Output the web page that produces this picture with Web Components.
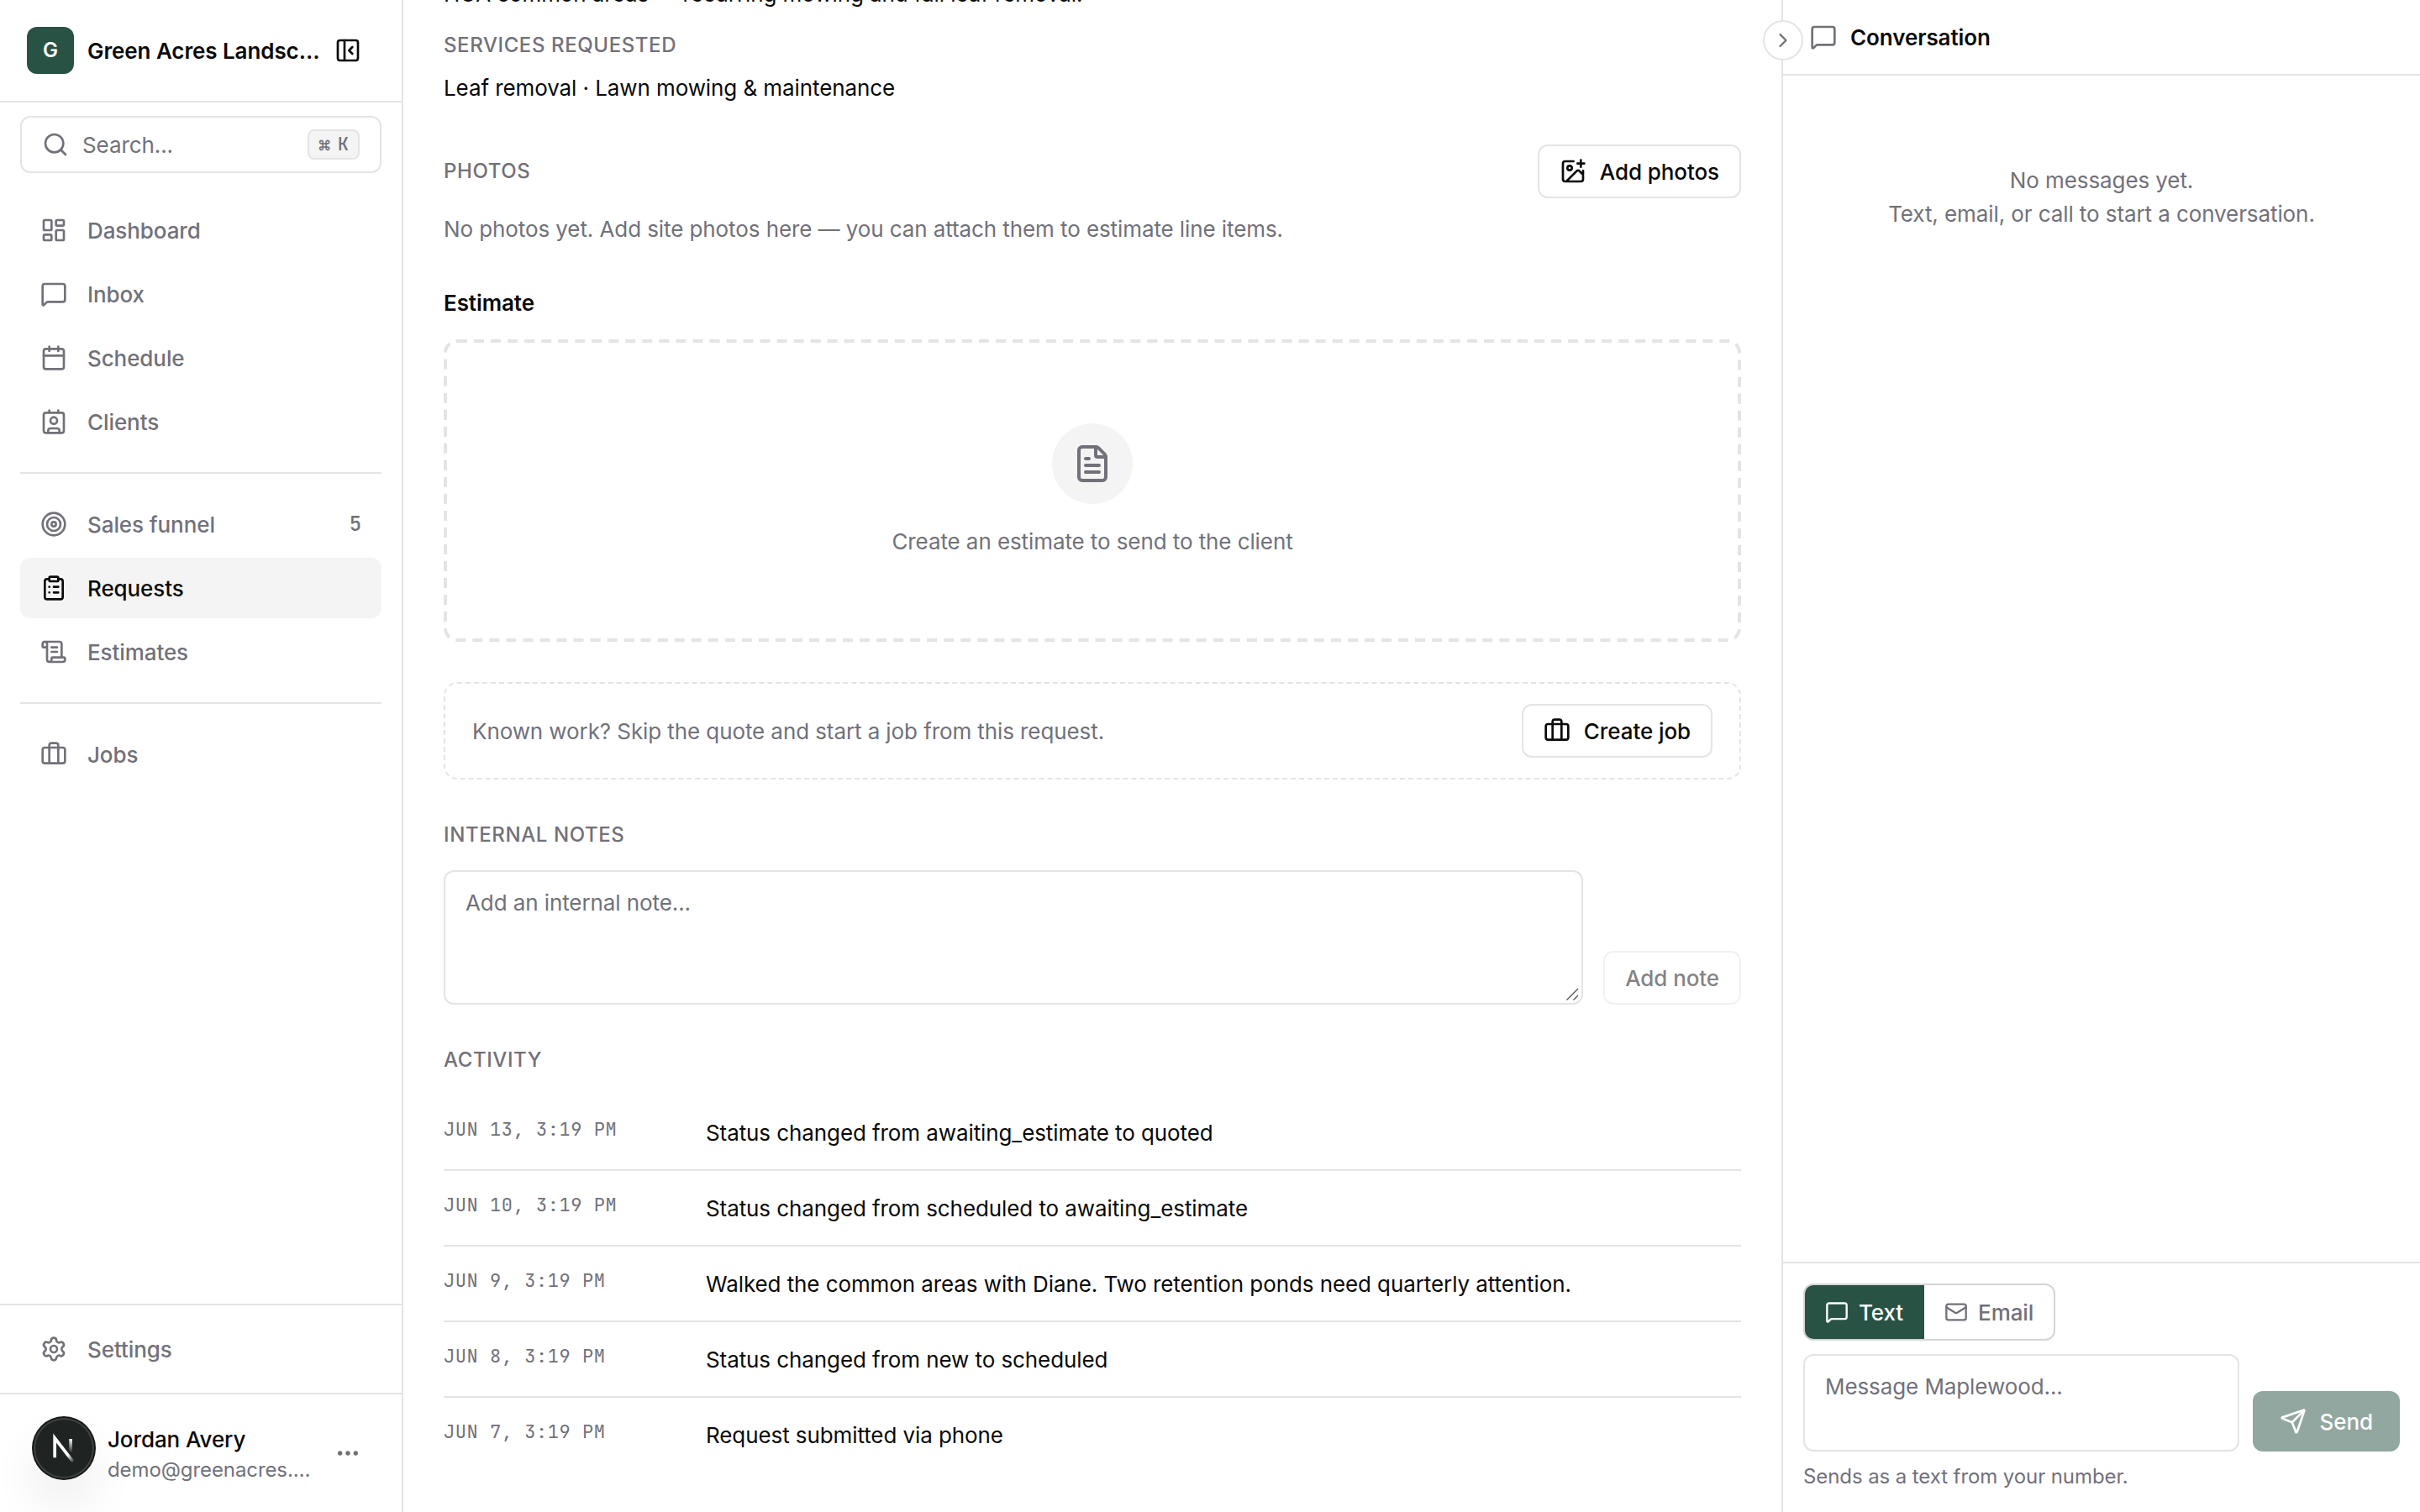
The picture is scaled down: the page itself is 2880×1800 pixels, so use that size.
<!DOCTYPE html>
<html lang="en">
<head>
<meta charset="utf-8">
<title>Request</title>
<style>
  :root {
    --ink: #0a0a0a;
    --muted: #71717a;
    --line: #e4e4e4;
    --soft: #f4f4f4;
    --brand: #285244;
    --mono: "JetBrains Mono", "DejaVu Sans Mono", monospace;
  }
  body {
    margin: 0;
    background: #fff;
    color: var(--ink);
    font-family: Inter, "Liberation Sans", sans-serif;
    font-size: 26px;
    line-height: 40px;
    letter-spacing: -0.09px;
  }
</style>
</head>
<body>
<app-shell>
  <app-sidebar slot="sidebar"></app-sidebar>

  <request-page>
    <p>HOA common areas — recurring mowing and fall leaf removal.</p>
    <section-block heading="Services requested" gap="12" top="24">
      <p>Leaf removal · Lawn mowing &amp; maintenance</p>
    </section-block>
    <section-block heading="Photos" gap="16">
      <ui-button slot="action" icon="image-plus">Add photos</ui-button>
      <p class="muted">No photos yet. Add site photos here — you can attach them to estimate line items.</p>
    </section-block>
    <section-block heading="Estimate" gap="24" strong>
      <empty-box icon="file-text">Create an estimate to send to the client</empty-box>
    </section-block>
    <job-prompt>
      Known work? Skip the quote and start a job from this request.
      <ui-button slot="action" icon="briefcase">Create job</ui-button>
    </job-prompt>
    <section-block heading="Internal notes" gap="24">
      <note-form></note-form>
    </section-block>
    <section-block heading="Activity" gap="24">
      <activity-row date="Jun 13, 3:19 PM">Status changed from awaiting_estimate to quoted</activity-row>
      <activity-row date="Jun 10, 3:19 PM">Status changed from scheduled to awaiting_estimate</activity-row>
      <activity-row date="Jun 9, 3:19 PM">Walked the common areas with Diane. Two retention ponds need quarterly attention.</activity-row>
      <activity-row date="Jun 8, 3:19 PM">Status changed from new to scheduled</activity-row>
      <activity-row date="Jun 7, 3:19 PM">Request submitted via phone</activity-row>
    </section-block>
  </request-page>

  <conversation-panel slot="panel"></conversation-panel>
</app-shell>

<script>
// 24x24 stroke icons
const icons = {
  'dashboard': '<rect width="7" height="9" x="3" y="3" rx="1"/><rect width="7" height="5" x="14" y="3" rx="1"/><rect width="7" height="9" x="14" y="12" rx="1"/><rect width="7" height="5" x="3" y="16" rx="1"/>',
  'message': '<path d="M22 17a2 2 0 0 1-2 2H6.828a2 2 0 0 0-1.414.586l-2.202 2.202A.71.71 0 0 1 2 21.286V5a2 2 0 0 1 2-2h16a2 2 0 0 1 2 2z"/>',
  'calendar': '<path d="M8 2v4M16 2v4M3 10h18"/><rect width="18" height="18" x="3" y="4" rx="2"/>',
  'contact': '<path d="M16 2v2M8 2v2M7 22v-2a2 2 0 0 1 2-2h6a2 2 0 0 1 2 2v2"/><circle cx="12" cy="11" r="3"/><rect width="18" height="18" x="3" y="4" rx="2"/>',
  'target': '<circle cx="12" cy="12" r="10"/><circle cx="12" cy="12" r="6"/><circle cx="12" cy="12" r="2"/>',
  'clipboard': '<rect width="8" height="4" x="8" y="2" rx="1"/><path d="M16 4h2a2 2 0 0 1 2 2v14a2 2 0 0 1-2 2H6a2 2 0 0 1-2-2V6a2 2 0 0 1 2-2h2M12 11h4M12 16h4M8 11h.01M8 16h.01"/>',
  'scroll': '<path d="M15 12h-5M15 8h-5M19 17V5a2 2 0 0 0-2-2H4"/><path d="M8 21h12a2 2 0 0 0 2-2v-1a1 1 0 0 0-1-1H11a1 1 0 0 0-1 1v1a2 2 0 1 1-4 0V5a2 2 0 1 0-4 0v2a1 1 0 0 0 1 1h3"/>',
  'briefcase': '<path d="M16 20V4a2 2 0 0 0-2-2h-4a2 2 0 0 0-2 2v16"/><rect width="20" height="14" x="2" y="6" rx="2"/>',
  'settings': '<path d="M9.671 4.136a2.34 2.34 0 0 1 4.659 0 2.34 2.34 0 0 0 3.319 1.915 2.34 2.34 0 0 1 2.33 4.033 2.34 2.34 0 0 0 0 3.831 2.34 2.34 0 0 1-2.33 4.033 2.34 2.34 0 0 0-3.319 1.915 2.34 2.34 0 0 1-4.659 0 2.34 2.34 0 0 0-3.32-1.915 2.34 2.34 0 0 1-2.33-4.033 2.34 2.34 0 0 0 0-3.831A2.34 2.34 0 0 1 6.35 6.051a2.34 2.34 0 0 0 3.319-1.915"/><circle cx="12" cy="12" r="3"/>',
  'panel-close': '<rect width="18" height="18" x="3" y="3" rx="2"/><path d="M9 3v18M16 15l-3-3 3-3"/>',
  'search': '<path d="m21 21-4.34-4.34"/><circle cx="11" cy="11" r="8"/>',
  'ellipsis': '<circle cx="12" cy="12" r="1"/><circle cx="19" cy="12" r="1"/><circle cx="5" cy="12" r="1"/>',
  'image-plus': '<path d="M16 5h6M19 2v6M21 11.5V19a2 2 0 0 1-2 2H5a2 2 0 0 1-2-2V5a2 2 0 0 1 2-2h7.5M21 15l-3.086-3.086a2 2 0 0 0-2.828 0L6 21"/><circle cx="9" cy="9" r="2"/>',
  'file-text': '<path d="M6 22a2 2 0 0 1-2-2V4a2 2 0 0 1 2-2h8a2.4 2.4 0 0 1 1.704.706l3.588 3.588A2.4 2.4 0 0 1 20 8v12a2 2 0 0 1-2 2z"/><path d="M14 2v5a1 1 0 0 0 1 1h5M10 9H8M16 13H8M16 17H8"/>',
  'chevron-right': '<path d="m9 18 6-6-6-6"/>',
  'mail': '<path d="m22 7-8.991 5.727a2 2 0 0 1-2.009 0L2 7"/><rect width="20" height="16" x="2" y="4" rx="2"/>',
  'send': '<path d="M14.536 21.686a.5.5 0 0 0 .937-.024l6.5-19a.496.496 0 0 0-.635-.635l-19 6.5a.5.5 0 0 0-.024.937l7.93 3.18a2 2 0 0 1 1.112 1.11z"/><path d="m21.854 2.147-10.94 10.939"/>'
};

class UiIcon extends HTMLElement {
  connectedCallback() {
    const size = this.getAttribute('size') || 32;
    this.attachShadow({ mode: 'open' }).innerHTML = `
      <style>
        :host { display: block; flex: none; width: ${size}px; height: ${size}px; }
        svg { display: block; }
      </style>
      <svg width="${size}" height="${size}" viewBox="0 0 24 24" fill="none" stroke="currentColor"
        stroke-width="2" stroke-linecap="round" stroke-linejoin="round">${icons[this.getAttribute('name')]}</svg>
    `;
  }
}

class UiButton extends HTMLElement {
  connectedCallback() {
    const icon = this.getAttribute('icon');
    this.attachShadow({ mode: 'open' }).innerHTML = `
      <style>
        :host {
          display: flex;
          align-items: center;
          gap: 16px;
          flex: none;
          box-sizing: border-box;
          height: 64px;
          padding: 0 24px;
          border: 2px solid var(--line);
          border-radius: 12px;
          background: #fff;
          color: var(--ink);
          font-weight: 500;
          white-space: nowrap;
        }
        :host([disabled]) { opacity: 0.5; }
        :host([primary]) {
          height: 72px;
          padding: 0 32px;
          border: 0;
          background: var(--brand);
          color: #fff;
        }
        span { padding-top: 2px; }
      </style>
      ${icon ? `<ui-icon name="${icon}"></ui-icon>` : ''}
      <span><slot></slot></span>
    `;
  }
}

class NavItem extends HTMLElement {
  connectedCallback() {
    this.attachShadow({ mode: 'open' }).innerHTML = `
      <style>
        :host {
          display: flex;
          align-items: center;
          gap: 24px;
          height: 72px;
          padding: 0 24px;
          border-radius: 12px;
          color: var(--muted);
          font-weight: 500;
        }
        :host([active]) { background: var(--soft); color: var(--ink); }
        .label { flex: 1; padding-top: 2px; }
        .count { font: 500 24px/32px var(--mono); }
      </style>
      <ui-icon name="${this.getAttribute('icon')}"></ui-icon>
      <span class="label"><slot></slot></span>
      ${this.hasAttribute('count') ? `<span class="count">${this.getAttribute('count')}</span>` : ''}
    `;
  }
}

class AppSidebar extends HTMLElement {
  connectedCallback() {
    this.attachShadow({ mode: 'open' }).innerHTML = `
      <style>
        :host {
          display: flex;
          flex-direction: column;
          box-sizing: border-box;
          width: 480px;
          height: 1800px;
          border-right: 2px solid var(--line);
        }
        header {
          display: flex;
          align-items: center;
          gap: 16px;
          height: 120px;
          padding: 0 48px 0 32px;
          border-bottom: 2px solid var(--line);
        }
        .logo {
          display: grid;
          place-items: center;
          flex: none;
          width: 56px;
          height: 56px;
          border-radius: 12px;
          background: var(--brand);
          color: #fff;
          font-size: 24px;
          font-weight: 600;
        }
        .name {
          flex: 1;
          min-width: 0;
          padding-top: 2px;
          white-space: nowrap;
          font-weight: 600;
        }
        .search {
          display: flex;
          align-items: center;
          gap: 16px;
          box-sizing: border-box;
          height: 68px;
          margin: 16px 24px 32px;
          padding: 0 24px;
          border: 2px solid var(--line);
          border-radius: 12px;
          color: var(--muted);
        }
        .search span { flex: 1; padding-top: 2px; }
        kbd {
          padding: 0 11px;
          border: 2px solid var(--line);
          border-radius: 8px;
          background: var(--soft);
          font: 500 22px/32px var(--mono);
          letter-spacing: 0;
          word-spacing: -4px;
        }
        nav {
          display: flex;
          flex-direction: column;
          gap: 4px;
          margin: 0 24px;
        }
        nav + nav {
          margin-top: 24px;
          padding-top: 24px;
          border-top: 2px solid var(--line);
        }
        .bottom {
          margin-top: auto;
          padding: 16px 24px;
          border-top: 2px solid var(--line);
        }
        footer {
          position: relative;
          display: flex;
          align-items: center;
          gap: 24px;
          box-sizing: border-box;
          height: 142px;
          padding: 0 48px 0 128px;
          border-top: 2px solid var(--line);
          color: var(--muted);
        }
        .user {
          flex: 1;
          min-width: 0;
          padding-top: 3px;
          line-height: 36px;
          white-space: nowrap;
        }
        .user .who { color: var(--ink); font-weight: 500; }
        .user .mail { font-size: 24px; }
        /* round badge floating over the corner */
        .badge {
          position: absolute;
          left: 40px;
          bottom: 40px;
          width: 72px;
          height: 72px;
          border-radius: 50%;
          background: #1f2422;
          box-shadow: 0 0 0 2px #171717, inset 0 0 0 2px rgba(255, 255, 255, 0.14),
            0 32px 64px -16px rgba(0, 0, 0, 0.24);
        }
      </style>
      <header>
        <div class="logo">G</div>
        <div class="name">Green Acres Landsc…</div>
        <ui-icon name="panel-close"></ui-icon>
      </header>
      <div class="search">
        <ui-icon name="search"></ui-icon>
        <span>Search...</span>
        <kbd>⌘ K</kbd>
      </div>
      <nav>
        <nav-item icon="dashboard">Dashboard</nav-item>
        <nav-item icon="message">Inbox</nav-item>
        <nav-item icon="calendar">Schedule</nav-item>
        <nav-item icon="contact">Clients</nav-item>
      </nav>
      <nav>
        <nav-item icon="target" count="5">Sales funnel</nav-item>
        <nav-item icon="clipboard" active>Requests</nav-item>
        <nav-item icon="scroll">Estimates</nav-item>
      </nav>
      <nav>
        <nav-item icon="briefcase">Jobs</nav-item>
      </nav>
      <div class="bottom">
        <nav-item icon="settings">Settings</nav-item>
      </div>
      <footer>
        <div class="user">
          <div class="who">Jordan Avery</div>
          <div class="mail">demo@greenacres.…</div>
        </div>
        <ui-icon name="ellipsis"></ui-icon>
        <svg class="badge" viewBox="0 0 72 72" fill="none" stroke-width="1.86">
          <defs>
            <linearGradient id="a" gradientUnits="userSpaceOnUse" x1="9.95" y1="11.13" x2="13.6" y2="15.6">
              <stop stop-color="#fff"/><stop offset="1" stop-color="#fff" stop-opacity="0"/>
            </linearGradient>
            <linearGradient id="b" gradientUnits="userSpaceOnUse" x1="11.8" y1="1.4" x2="11.79" y2="9.8">
              <stop stop-color="#fff"/><stop offset="1" stop-color="#fff" stop-opacity="0"/>
            </linearGradient>
          </defs>
          <g transform="translate(20.5 22) scale(2)">
            <path d="M13.3 15.2 2.34 1v11.6" stroke="url(#a)"/>
            <path d="M11.825 1.5v11.6" stroke="url(#b)"/>
          </g>
        </svg>
      </footer>
    `;
  }
}

class SectionBlock extends HTMLElement {
  connectedCallback() {
    const strong = this.hasAttribute('strong');
    this.attachShadow({ mode: 'open' }).innerHTML = `
      <style>
        :host { display: block; margin-top: ${this.getAttribute('top') || 48}px; }
        header {
          display: flex;
          align-items: center;
          justify-content: space-between;
          margin-bottom: ${this.getAttribute('gap')}px;
        }
        h2 {
          margin: 0;
          color: var(--muted);
          font-size: 24px;
          font-weight: 500;
          line-height: 36px;
          letter-spacing: 0.6px;
          text-transform: uppercase;
        }
        h2.strong {
          margin-bottom: -1px;
          padding-top: 1px;
          color: var(--ink);
          font-size: 26px;
          font-weight: 600;
          line-height: 40px;
          letter-spacing: -0.09px;
          text-transform: none;
        }
        ::slotted(p) { margin: 0 0 -1px; padding-top: 1px; }
        ::slotted(p.muted) { color: var(--muted); }
      </style>
      <header>
        <h2 class="${strong ? 'strong' : ''}">${this.getAttribute('heading')}</h2>
        <slot name="action"></slot>
      </header>
      <slot></slot>
    `;
  }
}

class EmptyBox extends HTMLElement {
  connectedCallback() {
    this.attachShadow({ mode: 'open' }).innerHTML = `
      <style>
        :host {
          position: relative;
          display: flex;
          flex-direction: column;
          align-items: center;
          gap: 25px;
          padding: 100px 0 99px;
          color: var(--muted);
        }
        /* scaled up so the dashes stay long */
        :host::before {
          content: "";
          position: absolute;
          top: 0;
          left: 0;
          box-sizing: border-box;
          width: 50%;
          height: 50%;
          border: 2px dashed var(--line);
          border-radius: 8px;
          transform: scale(2);
          transform-origin: 0 0;
        }
        .disc {
          display: grid;
          place-items: center;
          width: 96px;
          height: 96px;
          border-radius: 50%;
          background: var(--soft);
        }
      </style>
      <div class="disc"><ui-icon name="${this.getAttribute('icon')}" size="48"></ui-icon></div>
      <div><slot></slot></div>
    `;
  }
}

class JobPrompt extends HTMLElement {
  connectedCallback() {
    this.attachShadow({ mode: 'open' }).innerHTML = `
      <style>
        :host {
          display: flex;
          align-items: center;
          justify-content: space-between;
          margin-top: 48px;
          padding: 24px 32px;
          border: 2px dashed var(--line);
          border-radius: 16px;
          color: var(--muted);
        }
        div { padding-top: 2px; }
      </style>
      <div><slot></slot></div>
      <slot name="action"></slot>
    `;
  }
}

class UiTextarea extends HTMLElement {
  connectedCallback() {
    this.attachShadow({ mode: 'open' }).innerHTML = `
      <style>
        :host {
          position: relative;
          display: block;
          flex: 1;
          box-sizing: border-box;
          padding: 17px 24px 15px;
          border: 2px solid var(--line);
          border-radius: 12px;
          color: var(--muted);
        }
        svg { position: absolute; right: 2px; bottom: 2px; }
      </style>
      <slot></slot>
      ${this.hasAttribute('resizable') ? `
      <svg width="16" height="16" fill="none" stroke="#555" stroke-width="1.4">
        <path d="M.5 14.5 14 1M8.5 14.5 14 9"/>
      </svg>` : ''}
    `;
  }
}

class NoteForm extends HTMLElement {
  connectedCallback() {
    this.attachShadow({ mode: 'open' }).innerHTML = `
      <style>
        :host { display: flex; align-items: flex-end; gap: 24px; }
        ui-textarea { height: 160px; }
      </style>
      <ui-textarea resizable>Add an internal note...</ui-textarea>
      <ui-button disabled>Add note</ui-button>
    `;
  }
}

class ActivityRow extends HTMLElement {
  connectedCallback() {
    this.attachShadow({ mode: 'open' }).innerHTML = `
      <style>
        :host {
          display: flex;
          gap: 32px;
          padding: 25px 0 23px;
          border-bottom: 2px solid var(--line);
        }
        :host(:last-child) { border-bottom: 0; }
        time {
          width: 280px;
          color: var(--muted);
          font: 22px/32px var(--mono);
          letter-spacing: 0.55px;
          text-transform: uppercase;
        }
      </style>
      <time>${this.getAttribute('date')}</time>
      <span><slot></slot></span>
    `;
  }
}

class RequestPage extends HTMLElement {
  connectedCallback() {
    this.attachShadow({ mode: 'open' }).innerHTML = `
      <style>
        :host {
          display: flex;
          flex-direction: column;
          justify-content: flex-end;
          box-sizing: border-box;
          height: 1800px;
          padding: 0 48px 48px;
          overflow: hidden;
        }
        ::slotted(p) { margin: 0 0 -1px; padding-top: 1px; }
      </style>
      <slot></slot>
    `;
  }
}

class ConversationPanel extends HTMLElement {
  connectedCallback() {
    this.attachShadow({ mode: 'open' }).innerHTML = `
      <style>
        :host {
          position: relative;
          display: flex;
          flex-direction: column;
          box-sizing: border-box;
          width: 760px;
          height: 1800px;
          border-left: 2px solid var(--line);
          color: var(--muted);
        }
        header {
          display: flex;
          align-items: center;
          gap: 16px;
          height: 88px;
          padding: 0 32px;
          border-bottom: 2px solid var(--line);
        }
        h2 {
          margin: 0;
          padding-top: 2px;
          color: var(--ink);
          font-size: 26px;
          font-weight: 600;
        }
        .toggle {
          position: absolute;
          top: 24px;
          left: -24px;
          display: grid;
          place-items: center;
          box-sizing: border-box;
          width: 48px;
          height: 48px;
          border: 2px solid var(--line);
          border-radius: 50%;
          background: #fff;
        }
        .messages { flex: 1; padding-top: 105px; text-align: center; }
        .composer {
          display: flex;
          flex-direction: column;
          padding: 24px;
          border-top: 2px solid var(--line);
        }
        .tabs {
          display: flex;
          align-self: flex-start;
          overflow: hidden;
          border: 2px solid #d4d4d8;
          border-radius: 12px;
          font-weight: 500;
        }
        .tabs div {
          display: flex;
          align-items: center;
          gap: 12px;
          height: 64px;
          padding: 0 24px;
        }
        .tabs .on { padding-right: 25px; background: var(--brand); color: #fff; }
        .tabs span { padding-top: 2px; }
        .row { display: flex; align-items: flex-end; gap: 16px; margin: 16px 0 12px; }
        ui-textarea { height: 116px; }
        small { font-size: 24px; line-height: 36px; }
      </style>
      <header>
        <ui-icon name="message"></ui-icon>
        <h2>Conversation</h2>
      </header>
      <div class="messages">No messages yet.<br>Text, email, or call to start a conversation.</div>
      <div class="composer">
        <div class="tabs">
          <div class="on"><ui-icon name="message" size="28"></ui-icon><span>Text</span></div>
          <div><ui-icon name="mail" size="28"></ui-icon><span>Email</span></div>
        </div>
        <div class="row">
          <ui-textarea>Message Maplewood...</ui-textarea>
          <ui-button primary disabled icon="send">Send</ui-button>
        </div>
        <small>Sends as a text from your number.</small>
      </div>
      <div class="toggle"><ui-icon name="chevron-right" size="28"></ui-icon></div>
    `;
  }
}

class AppShell extends HTMLElement {
  connectedCallback() {
    this.attachShadow({ mode: 'open' }).innerHTML = `
      <style>
        :host {
          display: grid;
          grid-template-columns: 480px minmax(0, 1fr) 760px;
          height: 1800px;
          overflow: hidden;
        }
      </style>
      <slot name="sidebar"></slot>
      <slot></slot>
      <slot name="panel"></slot>
    `;
  }
}

customElements.define('ui-icon', UiIcon);
customElements.define('ui-button', UiButton);
customElements.define('nav-item', NavItem);
customElements.define('app-sidebar', AppSidebar);
customElements.define('section-block', SectionBlock);
customElements.define('empty-box', EmptyBox);
customElements.define('job-prompt', JobPrompt);
customElements.define('ui-textarea', UiTextarea);
customElements.define('note-form', NoteForm);
customElements.define('activity-row', ActivityRow);
customElements.define('request-page', RequestPage);
customElements.define('conversation-panel', ConversationPanel);
customElements.define('app-shell', AppShell);
</script>
</body>
</html>
